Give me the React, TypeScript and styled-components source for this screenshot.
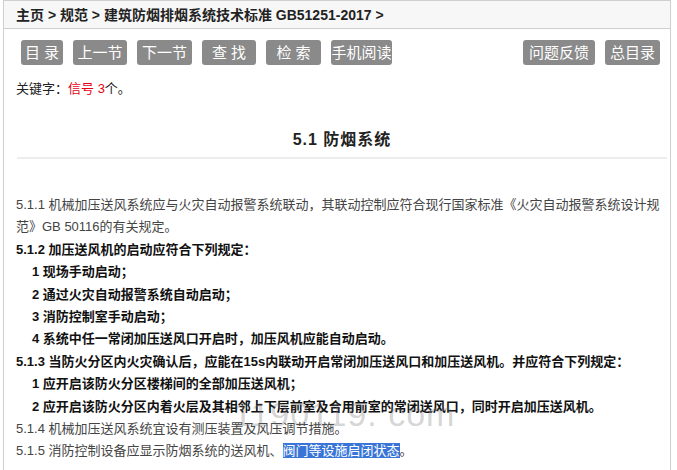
import React from 'react';
import styled, { createGlobalStyle } from 'styled-components';

const GlobalStyle = createGlobalStyle`
    body {
        margin: 0;
        background: #fff;
        font-family: "Liberation Sans", "Noto Sans CJK SC", sans-serif;
        color: #333;
    }
`;

const leftTools = [
    { label: '目 录', width: 42 },
    { label: '上一节', width: 54 },
    { label: '下一节', width: 55 },
    { label: '查 找', width: 54 },
    { label: '检 索', width: 55 },
    { label: '手机阅读', width: 61 },
];

const rightTools = [
    { label: '问题反馈', width: 72 },
    { label: '总目录', width: 55 },
];

const App: React.FC = () => {
    return (
        <Page>
            <GlobalStyle />
            <Breadcrumb>主页 &gt; 规范 &gt; 建筑防烟排烟系统技术标准 GB51251-2017 &gt;</Breadcrumb>
            <Toolbar>
                <ToolGroup>
                    {leftTools.map((t) => (
                        <ToolButton key={t.label} $w={t.width}>{t.label}</ToolButton>
                    ))}
                </ToolGroup>
                <ToolGroup>
                    {rightTools.map((t) => (
                        <ToolButton key={t.label} $w={t.width}>{t.label}</ToolButton>
                    ))}
                </ToolGroup>
            </Toolbar>
            <Keyword>
                关键字：<Hit>信号 3</Hit>个。
            </Keyword>
            <Title>5.1 防烟系统</Title>
            <Body>
                <Line>
                    5.1.1 机械加压送风系统应与火灾自动报警系统联动，其联动控制应符合现行国家标准《火灾自动报警系统设计规范》GB 50116的有关规定。
                </Line>
                <Line $bold>5.1.2 加压送风机的启动应符合下列规定：</Line>
                <Line $bold $indent>1 现场手动启动；</Line>
                <Line $bold $indent>2 通过火灾自动报警系统自动启动；</Line>
                <Line $bold $indent>3 消防控制室手动启动；</Line>
                <Line $bold $indent>4 系统中任一常闭加压送风口开启时，加压风机应能自动启动。</Line>
                <Line $bold>5.1.3 当防火分区内火灾确认后，应能在15s内联动开启常闭加压送风口和加压送风机。并应符合下列规定：</Line>
                <Line $bold $indent>1 应开启该防火分区楼梯间的全部加压送风机；</Line>
                <Line $bold $indent>2 应开启该防火分区内着火层及其相邻上下层前室及合用前室的常闭送风口，同时开启加压送风机。</Line>
                <Line>5.1.4 机械加压送风系统宜设有测压装置及风压调节措施。</Line>
                <Line>
                    5.1.5 消防控制设备应显示防烟系统的送风机、<Selected>阀门等设施启闭状态</Selected>。
                </Line>
                <Watermark>1190119. com</Watermark>
            </Body>
        </Page>
    );
};

const Page = styled.div`
    margin-left: 3px;
    width: 666px;
    min-height: 480px;
    border: 1px solid #cfcfcf;
    border-bottom: none;
`;

const Breadcrumb = styled.div`
    height: 27px;
    line-height: 28px;
    padding-left: 12px;
    background: #f7f7f7;
    border-bottom: 1px solid #cfcfcf;
    font-size: 14px;
    font-weight: bold;
    color: #222;
`;

const Toolbar = styled.div`
    display: flex;
    justify-content: space-between;
    margin-top: 11px;
    padding: 0 10px 0 17px;
`;

const ToolGroup = styled.div`
    display: flex;
    gap: 10px;
`;

const ToolButton = styled.div<{ $w: number }>`
    width: ${(p) => p.$w}px;
    height: 25px;
    line-height: 25px;
    text-align: center;
    background: #8a8a8a;
    color: #fff;
    border-radius: 3px;
    font-size: 15px;
    white-space: nowrap;
`;

const Keyword = styled.div`
    margin-top: 14px;
    padding-left: 12px;
    line-height: 20px;
    font-size: 13px;
    color: #222;
`;

const Hit = styled.span`
    color: #e60012;
`;

const Title = styled.div`
    margin: 29px 3px 0 13px;
    padding-bottom: 5px;
    line-height: 24px;
    border-bottom: 2px solid #ededed;
    text-align: center;
    font-size: 16px;
    font-weight: bold;
    letter-spacing: 1px;
    color: #222;
`;

const Body = styled.div`
    position: relative;
    margin-top: 35px;
    padding: 0 8px 0 12px;
    font-size: 13px;
    line-height: 22.4px;
`;

const Line = styled.div<{ $bold?: boolean; $indent?: boolean }>`
    padding-left: ${(p) => (p.$indent ? 16 : 0)}px;
    font-weight: ${(p) => (p.$bold ? 'bold' : 'normal')};
    color: ${(p) => (p.$bold ? '#111' : '#444')};
`;

const Selected = styled.span`
    background: #3875d7;
    color: #fff;
`;

const Watermark = styled.div`
    position: absolute;
    left: 229px;
    top: 203px;
    font-family: "Liberation Sans", sans-serif;
    font-size: 34px;
    line-height: 34px;
    letter-spacing: 1px;
    color: rgba(110, 110, 110, 0.3);
    pointer-events: none;
`;

export default App;
